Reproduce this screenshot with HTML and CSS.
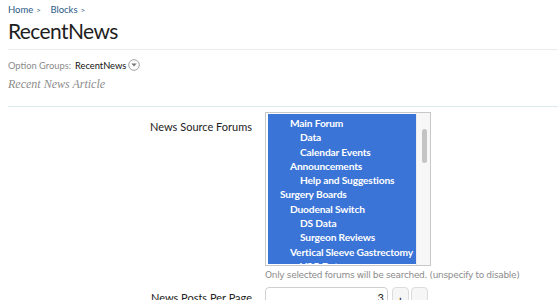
FILE: index.html
```html
<!DOCTYPE html>
<html>
<head>
<meta charset="utf-8">
<link rel="stylesheet" href="styles.css">
</head>
<body>
<div class="page">
  <nav class="crumbs">
    <a href="#">Home</a><span class="sep">&gt;</span>
    <a href="#">Blocks</a><span class="sep">&gt;</span>
  </nav>
  <h1 class="title">RecentNews</h1>
  <div class="groups">
    <span class="glabel">Option Groups:</span>
    <span class="gvalue">RecentNews</span>
    <span class="gicon"><svg width="12" height="12" viewBox="0 0 12 12"><circle cx="6" cy="6" r="5.3" fill="#fff" stroke="#9a9a9a" stroke-width="0.9"/><path d="M3.4 4.6 L8.6 4.6 L6 7.6 Z" fill="#777"/></svg></span>
  </div>
  <div class="section">Recent News Article</div>
  <div class="form">
    <div class="row">
      <label class="lbl">News Source Forums</label>
      <div class="ctrl">
        <div class="listbox">
          <div class="items">
            <div class="opt l1">Main Forum</div>
            <div class="opt l2">Data</div>
            <div class="opt l2">Calendar Events</div>
            <div class="opt l1">Announcements</div>
            <div class="opt l2">Help and Suggestions</div>
            <div class="opt l0">Surgery Boards</div>
            <div class="opt l1">Duodenal Switch</div>
            <div class="opt l2">DS Data</div>
            <div class="opt l2">Surgeon Reviews</div>
            <div class="opt l1">Vertical Sleeve Gastrectomy</div>
            <div class="opt l2">VSG Data</div>
          </div>
          <div class="scroll"><div class="thumb"></div></div>
        </div>
        <p class="hint">Only selected forums will be searched. (unspecify to disable)</p>
      </div>
    </div>
    <div class="row row2">
      <label class="lbl">News Posts Per Page</label>
      <div class="ctrl spin">
        <div class="num">3</div>
        <button class="sbtn">+</button>
        <button class="sbtn">-</button>
      </div>
    </div>
  </div>
</div>
</body>
</html>
```
FILE: styles.css
```css
html, body {
  margin: 0;
  padding: 0;
  background: #fff;
  overflow: hidden;
}
.page {
  padding: 0 0 0 8px;
  font-family: "Lato", "Open Sans", sans-serif;
  color: #222;
}
.crumbs {
  font-size: 9.5px;
  line-height: 12px;
  padding-top: 4px;
  height: 12px;
}
.crumbs a {
  color: #2b5a86;
  text-decoration: none;
}
.crumbs .sep {
  color: #2b5a86;
  font-size: 8px;
  margin: 0 7px 0 3px;
}
.title {
  margin: 0;
  font-size: 21px;
  font-weight: normal;
  line-height: 30px;
  height: 33px;
  letter-spacing: -0.6px;
  color: #1e1e1e;
  border-bottom: 1px solid #e9ecee;
}
.groups {
  display: flex;
  align-items: center;
  margin-top: 8px;
  height: 14px;
  font-size: 9.3px;
}
.glabel { color: #8a8a8a; margin-right: 4px; }
.gvalue { color: #111; }
.gicon { display: flex; margin-left: 2px; }
.section {
  margin-top: 5px;
  font-family: "Liberation Serif", "DejaVu Serif", serif;
  font-style: italic;
  font-size: 12px;
  line-height: 14px;
  color: #8c8c8c;
  height: 29px;
  border-bottom: 1px solid #d9e9ef;
}
.form {
  padding-top: 5px;
}
.row {
  display: grid;
  grid-template-columns: 244px 1fr;
  column-gap: 13px;
}
.lbl {
  text-align: right;
  font-size: 11px;
  line-height: 16px;
  padding-top: 7px;
  color: #222;
}
.listbox {
  width: 166px;
  height: 154px;
  box-sizing: border-box;
  border: 1px solid #c8c8c8;
  display: flex;
  overflow: hidden;
  background: #fff;
}
.items {
  flex: 1;
  background: #3a74d7;
  margin: 1px 0 1px 2px;
  padding-top: 2px;
  overflow: hidden;
}
.opt {
  color: #fff;
  font-family: "Lato", "Open Sans", sans-serif;
  font-size: 10.2px;
  font-weight: bold;
  letter-spacing: -0.15px;
  line-height: 14.3px;
  white-space: nowrap;
}
.l0 { padding-left: 12px; }
.l1 { padding-left: 22px; }
.l2 { padding-left: 32px; }
.scroll {
  width: 13px;
  background: #f7f7f7;
  border-left: 1px solid #ececec;
}
.thumb {
  width: 5px;
  height: 34px;
  margin: 16px 0 0 5px;
  background: #c4c4c4;
  border-radius: 3px;
}
.hint {
  margin: 3px 0 0 0;
  font-family: "DejaVu Sans", sans-serif;
  font-size: 9px;
  line-height: 12px;
  color: #8c8c8c;
  letter-spacing: -0.33px;
  white-space: nowrap;
}
.row2 { margin-top: 6px; }
.row2 .lbl { padding-top: 3px; }
.spin {
  display: flex;
  gap: 2px;
}
.num {
  width: 123px;
  height: 24px;
  box-sizing: border-box;
  border: 1px solid #cfcfcf;
  border-radius: 4px;
  text-align: right;
  padding: 3px 3px 0 0;
  font-size: 11px;
  margin-right: 2px;
}
.sbtn {
  width: 17px;
  height: 24px;
  border: 1px solid #dcdcdc;
  border-radius: 4px;
  background: #f6f6f6;
  font-size: 11px;
  font-weight: bold;
  padding: 0;
  color: #333;
  font-family: "Open Sans", sans-serif;
}
```
